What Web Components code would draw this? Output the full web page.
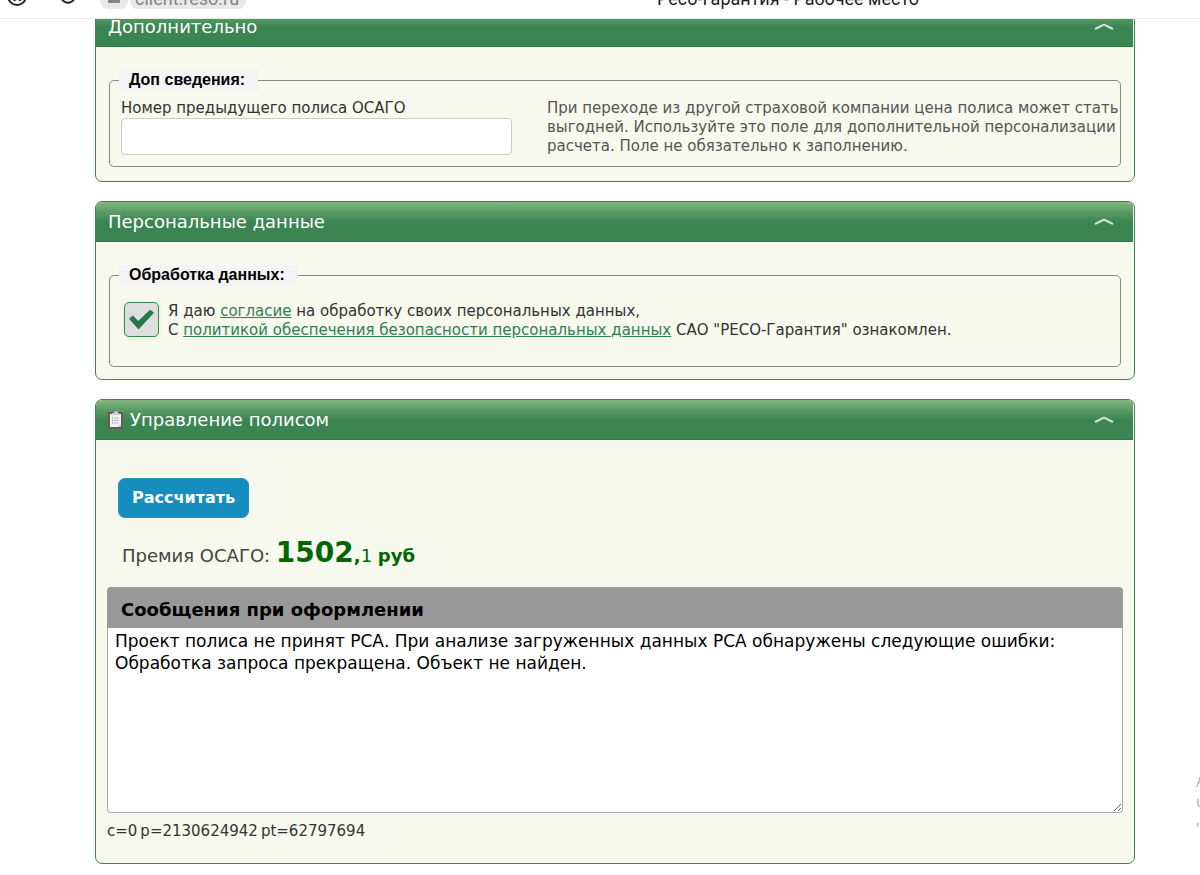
<!DOCTYPE html>
<html lang="ru">
<head>
<meta charset="utf-8">
<title>Ресо-Гарантия - Рабочее место</title>
<style>
  body {
    margin: 0;
    background: #fff;
    color: #333;
    font: 15px/19px "DejaVu Sans", Verdana, sans-serif;
    overflow: hidden;
  }
</style>
</head>
<body>
<policy-page></policy-page>

<script>
const define = (name, html, setup) => {
  const template = document.createElement('template');
  template.innerHTML = html;
  customElements.define(name, class extends HTMLElement {
    constructor() {
      super();
      this.attachShadow({ mode: 'open' }).append(template.content.cloneNode(true));
      if (setup) setup(this, this.shadowRoot);
    }
  });
};

define('browser-bar', `
  <style>
    :host {
      display: flex; align-items: flex-end;
      box-sizing: border-box; height: 19px; overflow: hidden;
      padding-bottom: 1px; border-bottom: 1px solid #ebebeb; background: #fff;
      font-family: Roboto, sans-serif; font-size: 18px;
    }
    .tools { flex: none; display: flex; align-items: flex-end; padding-left: 6px; height: 34px; }
    button { border: 0; padding: 0; background: none; display: block; }
    svg { display: block; }
    .reload { margin-left: 31px; }
    .lock { margin-left: 22px; }
    .lock, .address { height: 34px; margin-bottom: 8px; border-radius: 8px; background: #e9e9e9; }
    .lock { width: 28px; }
    .address { margin-left: 2px; padding: 0 6px 0 5px; width: 116px; box-sizing: border-box; line-height: 20px;
      display: flex; align-items: flex-end; color: #858585; white-space: nowrap; }
    .title { flex: 1; text-align: center; color: #222; line-height: 20px; padding: 0 0 8px 130px; }
  </style>
  <div class="tools">
    <button aria-label="Яндекс"><svg width="22" height="34" viewBox="0 0 22 34" fill="none" stroke="#222" stroke-width="2"><circle cx="11" cy="13" r="9"/><path d="M14 18V8h-3a3 3 0 0 0 0 7h3M11 14l-3 4"/></svg></button>
    <button class="reload" aria-label="Обновить"><svg width="19" height="34" viewBox="0 0 19 34" fill="none" stroke="#222" stroke-width="2"><path d="M2 13a7 7 0 1 0 3-6"/></svg></button>
    <button class="lock" aria-label="Безопасность"><svg width="28" height="34" viewBox="0 0 28 34"><rect x="8" y="18" width="12" height="10" rx="1" fill="#858585"/></svg></button>
    <div class="address"><span>client.reso.ru</span></div>
  </div>
  <div class="title">Ресо-Гарантия - Рабочее место</div>
`);

define('form-panel', `
  <style>
    :host { display: block; box-sizing: border-box; border: 1px solid #3b8553; border-radius: 7px; background: #f7f8ee; overflow: hidden; }
    header {
      display: flex; align-items: center; gap: 6px; box-sizing: border-box; height: 40px; padding: 0 18px 0 12px;
      color: #fff; background: linear-gradient(#84b67e 0, #5a9b66 10px, #3b8553 20px); border-bottom: 1px solid #2f7a49;
      margin-right: 1px;
    }
    h2 { flex: 1; margin: 0; font-size: 18px; line-height: 24px; font-weight: 400; }
    button { border: 0; padding: 0; background: none; color: #d3e6d6; display: block; }
    svg { display: block; }
  </style>
  <header>
    <slot name="icon"></slot>
    <h2></h2>
    <button aria-label="Свернуть"><svg width="22" height="10" viewBox="0 0 22 10" fill="none" stroke="currentColor" stroke-width="2"><path d="M2 7l9-4.500L20 7"/></svg></button>
  </header>
  <slot></slot>
`, (host, root) => { root.querySelector('h2').textContent = host.getAttribute('heading'); });

define('clipboard-icon', `
  <style>:host { display: block; margin-left: -1px; } svg { display: block; }</style>
  <svg width="17" height="20" viewBox="0 0 17 20">
    <rect x="1" y="2" width="15" height="17" rx="1" fill="#6e5a48"/>
    <path d="M3 4h11v13H3z" fill="#eef2f4"/>
    <path d="M11 17l3-3v3z" fill="#b9c6ce"/>
    <path d="M5 3h2q0-2 2-2t2 2h1v2H5z" fill="#c9ced1"/>
    <path d="M7 8h5M7 10.500h5M7 13h4" stroke="#b6c0c8"/>
    <path d="M5 8h1M5 10.500h1M5 13h1" stroke="#5c8a75"/>
  </svg>
`);

define('field-group', `
  <style>
    :host { display: block; }
    fieldset { margin: 0; box-sizing: border-box; border: 1px solid #888; border-radius: 5px; padding: 0 12px 0 11px; min-width: 0; }
    legend { margin-left: -2px; padding: 0 13px 0 10px; background: #f4f4f6; color: #000; font: bold 16px/20px "Liberation Sans", Arial, sans-serif; }
  </style>
  <fieldset><legend></legend><slot></slot></fieldset>
`, (host, root) => { root.querySelector('legend').textContent = host.getAttribute('legend'); });

define('previous-policy', `
  <style>
    :host { display: grid; grid-template-columns: 391px 1fr; column-gap: 35px; padding: 9px 0 10px; }
    label { display: block; }
    input { display: block; box-sizing: border-box; width: 100%; height: 37px; border: 1px solid #ccc; border-radius: 4px; background: #fff; }
    p { margin: 0; color: #555; margin-right: -12px; }
  </style>
  <div><label for="number">Номер предыдущего полиса ОСАГО</label><input id="number" type="text"></div>
  <p>При переходе из другой страховой компании цена полиса может стать выгодней. Используйте это поле для дополнительной персонализации расчета. Поле не обязательно к заполнению.</p>
`);

define('consent-check', `
  <style>
    :host { display: flex; align-items: flex-start; gap: 9px; padding: 17px 0 26px 3px; }
    input {
      appearance: none; flex: none; margin: 0; box-sizing: border-box; width: 35px; height: 35px;
      border: 1px solid #3b8553; border-radius: 5px; background: #dedede; box-shadow: 0 1px 4px #d4f5c4;
      display: grid; place-items: center;
    }
    input:checked::before { content: ""; width: 25px; height: 20px; background: #24784a; clip-path: polygon(0 46%, 16% 30%, 37% 58%, 85% 0, 100% 16%, 38% 100%); }
    a { color: #2f8050; }
  </style>
  <input id="consent" type="checkbox" checked>
  <label for="consent">Я даю <a href="#consent-text">согласие</a> на обработку своих персональных данных,<br>С <a href="#privacy">политикой обеспечения безопасности персональных данных</a> САО "РЕСО-Гарантия" ознакомлен.</label>
`);

define('premium-total', `
  <style>
    :host { display: block; color: #444; font-size: 18px; line-height: 34px; }
    output { color: #060; }
    .whole { font-size: 28px; }
  </style>
  <span>Премия ОСАГО:</span> <output><b class="whole">1502</b><b>,</b>1 <b>руб</b></output>
`);

define('message-log', `
  <style>
    :host { display: block; }
    label { display: block; box-sizing: border-box; height: 41px; padding: 2px 14px 0; border-radius: 4px 4px 0 0; background: #999; color: #000; font-weight: bold; font-size: 18px; line-height: 41px; }
    textarea {
      display: block; box-sizing: border-box; width: 100%; height: 185px; margin: 0; padding: 2px 7px;
      border: 1px solid #aaa; border-top: 0; border-radius: 0 0 4px 4px; background: #fff; color: #000;
      font: 17px/22px "DejaVu Sans", Verdana, sans-serif; outline: 0;
    }
  </style>
  <label for="log">Сообщения при оформлении</label>
  <textarea id="log">Проект полиса не принят РСА. При анализе загруженных данных РСА обнаружены следующие ошибки:
Обработка запроса прекращена. Объект не найден.</textarea>
`);

define('policy-control', `
  <style>
    :host { display: block; padding: 38px 11px 22px; }
    button {
      display: block; margin: 0 0 18px 11px; height: 40px; padding: 0 13px; border: 1px solid #2b8db5;
      border-radius: 7px; background: #168dbf; color: #fff; font: bold 16px/20px "DejaVu Sans", Verdana, sans-serif;
    }
    premium-total { margin: 0 0 14px 15px; }
    .ids { display: flex; gap: 3px; margin-top: 9px; }
  </style>
  <button type="button">Рассчитать</button>
  <premium-total></premium-total>
  <message-log></message-log>
  <div class="ids"><span>c=0</span><span>p=2130624942</span><span>pt=62797694</span></div>
`);

define('activation-notice', `
  <style>
    :host { position: fixed; top: 769px; left: calc(100% - 4px); width: 100px; color: #b0b0b0; font: 16px/24px "Open Sans", sans-serif; }
    div { white-space: nowrap; }
  </style>
  <div>А</div><div>Ч</div><div>"</div>
`);

define('policy-page', `
  <style>
    :host { display: block; }
    main { display: flex; flex-direction: column; gap: 19px; padding: 0 65px 13px 95px; overflow: hidden; }
    form-panel:first-child { margin-top: -13px; }
    field-group { margin: 23px 13px 14px; }
    .consent { margin-bottom: 12px; }
  </style>
  <browser-bar></browser-bar>
  <main>
    <form-panel heading="Дополнительно"><field-group legend="Доп сведения:"><previous-policy></previous-policy></field-group></form-panel>
    <form-panel heading="Персональные данные"><field-group class="consent" legend="Обработка данных:"><consent-check></consent-check></field-group></form-panel>
    <form-panel heading="Управление полисом"><clipboard-icon slot="icon"></clipboard-icon><policy-control></policy-control></form-panel>
  </main>
  <activation-notice></activation-notice>
`);
</script>
</body>
</html>
